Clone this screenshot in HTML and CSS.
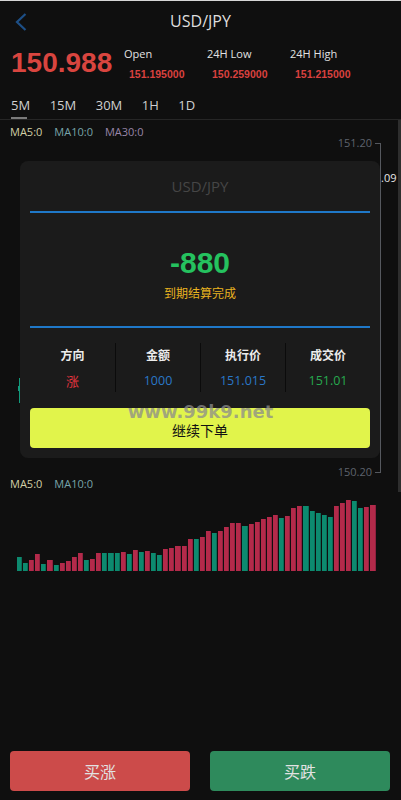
FILE: index.html
```html
<!DOCTYPE html>
<html lang="zh">
<head>
<meta charset="utf-8">
<title>USD/JPY</title>
<link rel="stylesheet" href="styles.css">
</head>
<body>
<div class="page">
  <div class="topline"></div>
  <header class="header">
    <svg class="back" width="14" height="20" viewBox="0 0 14 20"><polyline points="10.5,2 2,10 10.5,18" fill="none" stroke="#1d4f86" stroke-width="2.2"/></svg>
    <div class="title">USD/JPY</div>
  </header>

  <section class="price-row">
    <div class="price">150.988</div>
    <div class="stat"><div class="stat-label">Open</div><div class="stat-val">151.195000</div></div>
    <div class="stat"><div class="stat-label">24H Low</div><div class="stat-val">150.259000</div></div>
    <div class="stat"><div class="stat-label">24H High</div><div class="stat-val">151.215000</div></div>
  </section>

  <nav class="tabs">
    <span class="tab active">5M</span>
    <span class="tab">15M</span>
    <span class="tab">30M</span>
    <span class="tab">1H</span>
    <span class="tab">1D</span>
  </nav>

  <main class="chart">
    <div class="ma-row">
      <span class="ma5">MA5:0</span><span class="ma10">MA10:0</span><span class="ma30">MA30:0</span>
    </div>
    <div class="kline"></div>
    <div class="ma-row vol-legend">
      <span class="ma5">MA5:0</span><span class="ma10">MA10:0</span>
    </div>
    <div class="vol-bars" id="bars"></div>

    <div class="axis-line"></div>
    <div class="tick tick-top"></div>
    <div class="tick tick-bottom"></div>
    <div class="axis-label label-top">151.20</div>
    <div class="axis-label label-bottom">150.20</div>
    <div class="cur-price">.09</div>
    <div class="edge-strip"></div>
    <div class="candle"><div class="candle-body"></div></div>

    <div class="modal">
      <div class="modal-title">USD/JPY</div>
      <div class="blue-line"></div>
      <div class="result">-880</div>
      <div class="result-note">到期结算完成</div>
      <div class="blue-line second"></div>
      <div class="info-table">
        <div class="cell"><div class="cell-head">方向</div><div class="cell-val up">涨</div></div>
        <div class="cell"><div class="cell-head">金额</div><div class="cell-val blue">1000</div></div>
        <div class="cell"><div class="cell-head">执行价</div><div class="cell-val blue">151.015</div></div>
        <div class="cell"><div class="cell-head">成交价</div><div class="cell-val green">151.01</div></div>
      </div>
      <div class="continue-btn"><span class="continue-text">继续下单</span></div>
    </div>

    <div class="watermark">www.99k9.net</div>
  </main>

  <footer class="footer">
    <div class="btn btn-up">买涨</div>
    <div class="btn btn-down">买跌</div>
  </footer>
</div>
<script>
(function(){
  var h=[14,7.7,10.7,16.7,6.7,11,6.3,8.3,9.7,13.7,17.7,10.7,12.3,18,18,18,18,18.7,17,21,19.3,20,17.7,16,21.7,23.3,25,25,32,31.7,34,39.7,38.3,40,43.7,48,48,45.3,46.7,48.7,52,53.7,55.7,53,54.7,63,65.3,65,60,57.7,56.3,54.3,64.7,68.3,71,70,63,64.3,65.7];
  var c="ggrrgrgrrrrgrrgggrgrgrggrrrrrgrrgrrrrgrrrrrgrrrgggggrrrggrr";
  var box=document.getElementById('bars');
  for(var i=0;i<h.length;i++){
    var b=document.createElement('div');
    b.className='bar '+(c[i]==='g'?'bar-g':'bar-r');
    b.style.height=h[i]+'px';
    box.appendChild(b);
  }
})();
</script>
</body>
</html>
```
FILE: styles.css
```css
* { box-sizing: border-box; }
html, body { margin: 0; padding: 0; background: #0f0f0f; }
body { font-family: "Open Sans", "Noto Sans", "Noto Sans CJK SC", sans-serif; color: #ddd; }
.page { width: 401px; height: 800px; display: flex; flex-direction: column; overflow: hidden; }

.topline { height: 1px; background: #d6d6d6; flex: none; }

.header { height: 40px; flex: none; display: flex; align-items: center; justify-content: center; position: relative; }
.back { position: absolute; left: 15px; top: 11px; }
.title { font-size: 16px; color: #dedede; line-height: 20px; }

.price-row { height: 51px; flex: none; display: flex; align-items: flex-start; padding: 6px 0 0 11px; }
.price { font-family: "Liberation Sans", Arial, sans-serif; font-weight: bold; font-size: 28px; line-height: 28px; color: #d9453f; margin-top: 2px; width: 113px; flex: none; }
.stat { width: 83px; flex: none; }
.stat-label { font-size: 11px; line-height: 14px; color: #e2e2e2; }
.stat-val { font-family: "Liberation Sans", Arial, sans-serif; font-weight: bold; font-size: 10.5px; line-height: 14px; color: #d9413f; margin-top: 6px; padding-left: 5px; }

.tabs { height: 28px; flex: none; display: flex; gap: 19.5px; padding-left: 11px; border-bottom: 1px solid #262626; }
.tab { position: relative; font-size: 13px; line-height: 26px; height: 27px; color: #d0d0d0; }
.tab.active::after { content: ""; position: absolute; left: 0; bottom: 0; width: 16px; height: 2px; background: #7a7a7a; }

.chart { flex: 1; position: relative; }
.ma-row { height: 24px; display: flex; gap: 12px; padding-left: 10px; align-items: center; font-size: 11px; line-height: 14px; }
.ma5 { color: #d2cfa6; }
.ma10 { color: #78a4a9; }
.ma30 { color: #9885a8; }
.kline { height: 332px; }
.vol-legend { height: 16px; }
.vol-bars { height: 79px; display: flex; align-items: flex-end; gap: 1px; padding-left: 17px; }
.bar { width: 5.1px; flex: none; }
.bar-r { background: #b32a4a; box-shadow: inset -1px 0 0 #8f2240; }
.bar-g { background: #0d8a6f; box-shadow: inset -1px 0 0 #0a6d58; }

.axis-line { position: absolute; left: 380px; top: 23px; width: 1px; height: 330px; background: #55585e; }
.tick { position: absolute; left: 375px; width: 5px; height: 1px; background: #55585e; }
.tick-top { top: 23px; }
.tick-bottom { top: 352px; }
.axis-label { position: absolute; right: 29px; font-size: 11px; line-height: 14px; color: #5e636d; }
.label-top { top: 16px; }
.label-bottom { top: 345px; }
.cur-price { position: absolute; left: 381px; top: 51px; font-size: 11px; line-height: 14px; color: #e6e6e6; }
.edge-strip { position: absolute; right: 0; top: 0; width: 3px; height: 372px; background: #2e2e2e; }
.candle { position: absolute; left: 18.5px; top: 258px; width: 1px; height: 25px; background: #129a7c; }
.candle-body { position: absolute; left: -0.5px; top: 8px; width: 2px; height: 5px; background: #129a7c; }

.modal { position: absolute; left: 20px; top: 41px; width: 360px; height: 297px; background: #1b1b1b; border-radius: 8px; padding: 0 10px; }
.modal-title { padding-top: 15px; height: 35px; text-align: center; font-size: 15px; line-height: 20px; color: #464646; }
.blue-line { height: 2px; background: #1f78c8; margin-top: 15px; }
.blue-line.second { margin-top: 25px; }
.result { margin-top: 35px; text-align: center; font-family: "Liberation Sans", Arial, sans-serif; font-weight: bold; font-size: 30px; line-height: 30px; color: #25c25f; }
.result-note { margin-top: 7px; text-align: center; font-family: "Noto Sans CJK SC", sans-serif; font-size: 12px; line-height: 16px; color: #e9b320; }
.info-table { margin-top: 15px; height: 49px; display: grid; grid-template-columns: repeat(4, 1fr); }
.cell { text-align: center; padding-top: 4px; }
.cell + .cell { border-left: 1px solid #0b0b0b; }
.cell-head { font-family: "Noto Sans CJK SC", sans-serif; font-size: 12px; line-height: 16px; font-weight: bold; color: #ececec; }
.cell-val { margin-top: 10px; font-size: 12.5px; line-height: 16px; font-family: "Open Sans", "Noto Sans CJK SC", sans-serif; }
.cell-val.up { color: #e0343e; font-family: "Noto Sans CJK SC", sans-serif; font-size: 13px; }
.cell-val.blue { color: #2a78c8; }
.cell-val.green { color: #27a94f; }
.continue-btn { margin-top: 16px; height: 40px; border-radius: 4px; background: #e1f44b; display: flex; align-items: center; justify-content: center; padding-top: 3px; }
.continue-text { color: #111; font-family: "Noto Sans CJK SC", sans-serif; font-size: 14px; line-height: 14px; }

.watermark { position: absolute; left: 0; right: 0; top: 285px; text-align: center; font-family: "DejaVu Sans", sans-serif; font-weight: bold; font-size: 18px; line-height: 14px; color: rgba(140,140,140,0.75); pointer-events: none; }

.footer { flex: none; height: 49px; display: flex; gap: 20px; padding: 0 11px 9px 10px; }
.btn { flex: 1; height: 40px; border-radius: 4px; text-align: center; line-height: 40px; font-family: "Noto Sans CJK SC", sans-serif; font-size: 16px; color: #e2e2e2; }
.btn-up { background: #cc4b4a; }
.btn-down { background: #2e8a5c; }
```
